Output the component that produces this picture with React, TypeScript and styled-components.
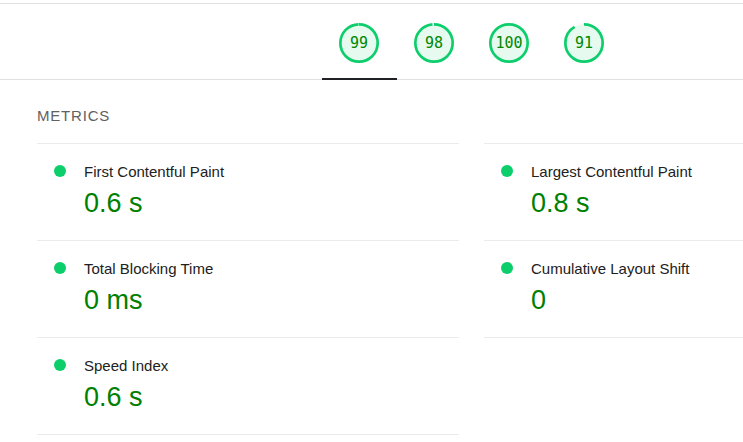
import React from 'react';
import styled, { createGlobalStyle } from 'styled-components';

const GlobalStyle = createGlobalStyle`
  html, body {
    margin: 0;
    padding: 0;
    background: #fff;
    overflow: hidden;
  }
  body {
    font-family: "Liberation Sans", Arial, sans-serif;
  }
`;

const Page = styled.div`
  width: 943px;
  padding-top: 3px;
`;

const ScoreBar = styled.div`
  display: flex;
  justify-content: center;
  border-top: 1px solid #e0e0e0;
  border-bottom: 1px solid #e0e0e0;
  height: 75px;
`;

const Tab = styled.div<{ $active?: boolean }>`
  position: relative;
  width: 75px;
  display: flex;
  justify-content: center;
  padding-top: 19px;
  box-sizing: border-box;

  &::after {
    content: '';
    position: absolute;
    left: 0;
    right: 0;
    bottom: -1px;
    height: 2px;
    background: ${p => (p.$active ? '#202124' : 'transparent')};
  }
`;

const GaugeWrap = styled.div`
  position: relative;
  width: 40px;
  height: 40px;
`;

const GaugeLabel = styled.span`
  position: absolute;
  inset: 0;
  display: flex;
  align-items: center;
  justify-content: center;
  font-family: "DejaVu Sans Mono", "Liberation Mono", monospace;
  font-size: 15px;
  color: #008800;
`;

const Content = styled.div`
  padding: 0 37px;
`;

const GroupTitle = styled.div`
  padding: 27px 0 18px;
  font-size: 15px;
  line-height: 18px;
  letter-spacing: 0.8px;
  text-transform: uppercase;
  color: #616161;
`;

const MetricGrid = styled.div`
  display: grid;
  grid-template-columns: 1fr 1fr;
  column-gap: 25px;
`;

const Metric = styled.div<{ $first?: boolean }>`
  display: flex;
  gap: 18px;
  padding: 20px 17px 21px;
  border-bottom: 1px solid #ebebeb;
  border-top: ${p => (p.$first ? '1px solid #ebebeb' : 'none')};
`;

const Dot = styled.span`
  flex: none;
  width: 12px;
  height: 12px;
  margin-top: 1px;
  border-radius: 50%;
  background: #0cce6b;
`;

const MetricBody = styled.div`
  display: flex;
  flex-direction: column;
`;

const MetricTitle = styled.div`
  font-size: 15px;
  line-height: 16px;
  color: #212121;
`;

const MetricValue = styled.div`
  margin-top: 7px;
  font-size: 27px;
  line-height: 32px;
  color: #008000;
`;

const Gauge = ({ score }: { score: number }) => {
  const c = 2 * Math.PI * 56;
  return (
    <GaugeWrap>
      <svg width="40" height="40" viewBox="0 0 120 120">
        <circle cx="60" cy="60" r="56" fill="rgba(12,206,107,0.1)" stroke="none" />
        <circle
          cx="60"
          cy="60"
          r="56"
          fill="none"
          stroke="#0cce6b"
          strokeWidth="8"
          strokeDasharray={`${(score / 100) * c} ${c}`}
          transform="rotate(-90 60 60)"
        />
      </svg>
      <GaugeLabel>{score}</GaugeLabel>
    </GaugeWrap>
  );
};

const scores = [99, 98, 100, 91];

const metrics = [
  { title: 'First Contentful Paint', value: '0.6 s' },
  { title: 'Largest Contentful Paint', value: '0.8 s' },
  { title: 'Total Blocking Time', value: '0 ms' },
  { title: 'Cumulative Layout Shift', value: '0' },
  { title: 'Speed Index', value: '0.6 s' },
];

export default function App() {
  return (
    <>
      <GlobalStyle />
      <Page>
        <ScoreBar>
          {scores.map((s, i) => (
            <Tab key={i} $active={i === 0}>
              <Gauge score={s} />
            </Tab>
          ))}
        </ScoreBar>
        <Content>
          <GroupTitle>Metrics</GroupTitle>
          <MetricGrid>
            {metrics.map((m, i) => (
              <Metric key={m.title} $first={i < 2}>
                <Dot />
                <MetricBody>
                  <MetricTitle>{m.title}</MetricTitle>
                  <MetricValue>{m.value}</MetricValue>
                </MetricBody>
              </Metric>
            ))}
          </MetricGrid>
        </Content>
      </Page>
    </>
  );
}
